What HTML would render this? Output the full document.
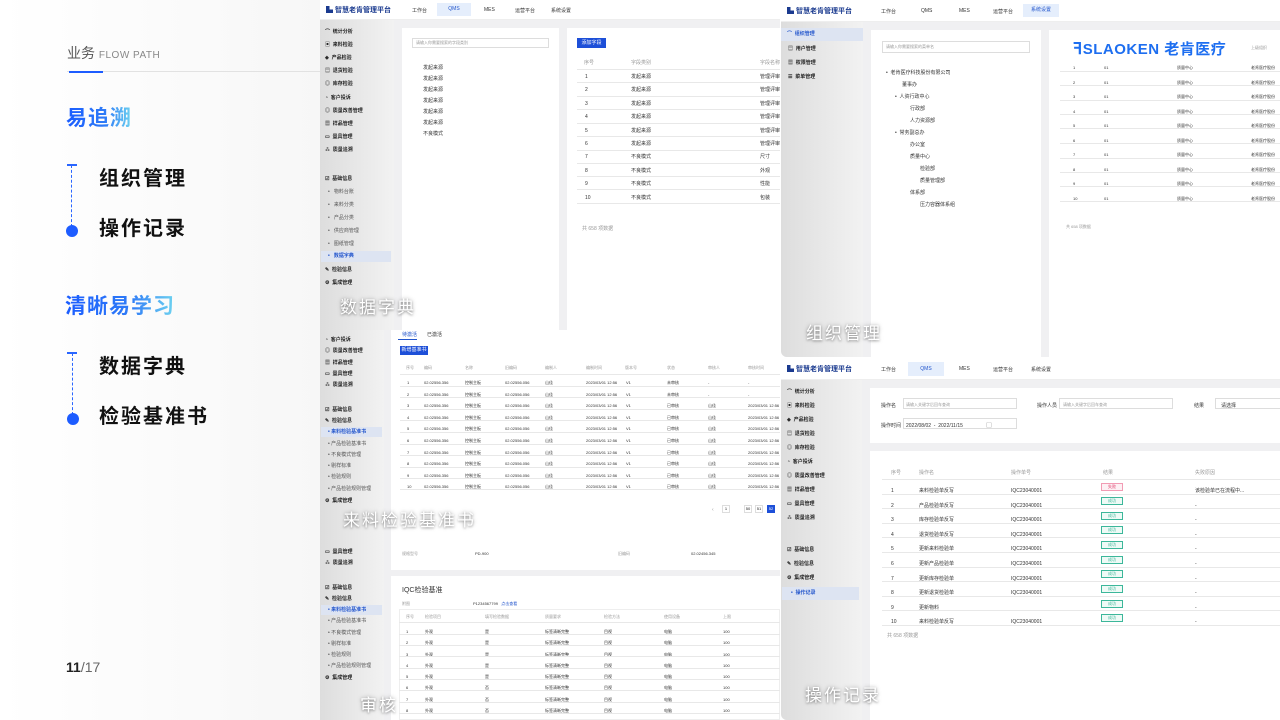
<!DOCTYPE html>
<html><head><meta charset="utf-8">
<style>
*{margin:0;padding:0;box-sizing:border-box}
body{width:1280px;height:720px;overflow:hidden;position:relative;background:#fff;font-family:"Liberation Sans","Noto Sans CJK SC",sans-serif;color:#222}
.a{position:absolute}
.panel{position:absolute;overflow:hidden;background:#f0f0f2}
.top{position:absolute;left:0;top:0;right:0;background:#fff;border-bottom:1px solid #eee}
.logo{position:absolute;font-size:7px;font-weight:bold;color:#1a3a8f;white-space:nowrap}
.nav{position:absolute;font-size:5px;color:#333;white-space:nowrap}
.navon{background:#e5eefc;color:#2255cc;text-align:center}
.side{position:absolute;left:0;bottom:0;background:linear-gradient(90deg,#ddd,#f2f2f2)}
.si{position:absolute;font-size:5px;color:#222;white-space:nowrap;font-weight:bold}
.si.sub{font-weight:normal;color:#555}
.on{background:#dde4f2;color:#2255cc}
.card{position:absolute;background:#fff}
.t{position:absolute;font-size:5px;color:#333;white-space:nowrap}
.g{color:#999}
.row{position:absolute;height:1px;background:#e8e8e8}
.btn{position:absolute;background:#1d4fd8;color:#fff;font-size:5px;text-align:center}
.ov{position:absolute;color:#fff;font-size:17px;letter-spacing:2px;text-shadow:0 0 4px rgba(0,0,0,.35),0 1px 2px rgba(0,0,0,.3);white-space:nowrap}
.head{position:absolute;font-size:20px;font-weight:bold;color:#111;letter-spacing:2px;white-space:nowrap}
.blue{position:absolute;font-size:21px;font-weight:bold;background:linear-gradient(90deg,#1a5cff,#2f7cf7 60%,#6fd4f0);-webkit-background-clip:text;color:transparent;white-space:nowrap;letter-spacing:1px}
.dash{position:absolute;width:0;border-left:1.5px dashed #2a66ff}
.dot{position:absolute;width:12px;height:12px;border-radius:50%;background:#1d5cff}
.cap{position:absolute;width:10px;height:1.5px;background:#2a66ff}
.tag{position:absolute;width:22px;height:8px;border:1px solid #3cb79a;color:#3cb79a;font-size:4px;text-align:center;line-height:6px;background:#effaf6}
</style></head><body>
<div class="a" style="left:0;top:0;width:320px;height:720px;background:linear-gradient(90deg,#fff,#f7f7f7)"></div>

<div class="a" style="left:67px;top:43px;font-size:14px;color:#555;white-space:nowrap">业务 <span style="font-size:10px;color:#888;letter-spacing:.5px">FLOW PATH</span></div>
<div class="a" style="left:67px;top:71px;width:713px;height:1px;background:#e2e2e2"></div>
<div class="a" style="left:69px;top:71px;width:34px;height:2px;background:#1d5cff"></div>
<div class="blue" style="left:66px;top:102px">易追溯</div>
<div class="cap" style="left:67px;top:164px"></div><div class="dash" style="left:71px;top:165px;height:62px"></div><div class="dot" style="left:66px;top:225px"></div>
<div class="head" style="left:99px;top:162px">组织管理</div>
<div class="head" style="left:99px;top:212px">操作记录</div>
<div class="blue" style="left:65px;top:290px">清晰易学习</div>
<div class="cap" style="left:67px;top:352px"></div><div class="dash" style="left:72px;top:353px;height:62px"></div><div class="dot" style="left:67px;top:413px"></div>
<div class="head" style="left:99px;top:350px">数据字典</div>
<div class="head" style="left:99px;top:400px">检验基准书</div>
<div class="a" style="left:66px;top:659px;font-size:14px;color:#222;font-weight:bold">11<span style="font-weight:normal;color:#666">/17</span></div>

<!-- Panel A -->
<div class="panel" style="left:320px;top:0;width:460px;height:330px;border-radius:6px 0 0 0">
 <div class="top" style="height:20px"></div>
 <div class="logo" style="left:6px;top:5px">▙ 智慧老肯管理平台</div>
 <div class="nav" style="left:92px;top:7px">工作台</div>
 <div class="nav navon" style="left:117px;top:3px;width:34px;height:13px;line-height:13px">QMS</div>
 <div class="nav" style="left:164px;top:7px">MES</div>
 <div class="nav" style="left:195px;top:7px">运营平台</div>
 <div class="nav" style="left:231px;top:7px">系统设置</div>
 <div class="side" style="top:20px;width:74px"></div>
 <div class="si" style="left:5px;top:28px">⌒ &nbsp;统计分析</div>
 <div class="si" style="left:5px;top:41px">▣ &nbsp;来料检验</div>
 <div class="si" style="left:5px;top:54px">◈ &nbsp;产品检验</div>
 <div class="si" style="left:5px;top:67px">▤ &nbsp;退货检验</div>
 <div class="si" style="left:5px;top:80px">◎ &nbsp;库存检验</div>
 <div class="si" style="left:5px;top:94px">◔ &nbsp;客户投诉</div>
 <div class="si" style="left:5px;top:107px">◎ &nbsp;质量改善管理</div>
 <div class="si" style="left:5px;top:120px">▦ &nbsp;样品管理</div>
 <div class="si" style="left:5px;top:133px">▭ &nbsp;量具管理</div>
 <div class="si" style="left:5px;top:146px">⁂ &nbsp;质量追溯</div>
 <div class="si" style="left:5px;top:175px">☑ &nbsp;基础信息</div>
 <div class="si sub" style="left:8px;top:188px">• &nbsp; 物料台账</div>
 <div class="si sub" style="left:8px;top:201px">• &nbsp; 来料分类</div>
 <div class="si sub" style="left:8px;top:214px">• &nbsp; 产品分类</div>
 <div class="si sub" style="left:8px;top:227px">• &nbsp; 供应商管理</div>
 <div class="si sub" style="left:8px;top:240px">• &nbsp; 图纸管理</div>
 <div class="si on" style="left:1px;top:251px;width:70px;height:11px;line-height:11px;padding-left:7px">• &nbsp; 数据字典</div>
 <div class="si" style="left:5px;top:266px">✎ &nbsp;检验信息</div>
 <div class="si" style="left:5px;top:279px">⚙ &nbsp;集成管理</div>
 <div class="card" style="left:82px;top:28px;width:157px;height:302px"></div>
 <div class="a" style="left:92px;top:38px;width:137px;height:10px;border:1px solid #ddd"></div>
 <div class="t g" style="left:96px;top:40px;font-size:4px">请输入你需要搜索的字段类别</div>
 <div class="t" style="left:103px;top:64px">发起来源</div><div class="t" style="left:103px;top:75px">发起来源</div><div class="t" style="left:103px;top:86px">发起来源</div><div class="t" style="left:103px;top:97px">发起来源</div><div class="t" style="left:103px;top:108px">发起来源</div><div class="t" style="left:103px;top:119px">发起来源</div><div class="t" style="left:103px;top:130px">不良模式</div>
 <div class="card" style="left:247px;top:28px;width:213px;height:302px"></div>
 <div class="btn" style="left:257px;top:38px;width:29px;height:10px;line-height:10px">添加字段</div>
 <div class="t g" style="left:264px;top:59px">序号</div><div class="t g" style="left:311px;top:59px">字段类别</div><div class="t g" style="left:440px;top:59px">字段名称</div>
 <div class="row" style="left:257px;top:69px;width:203px"></div>
 <div class="t" style="left:265px;top:71px;line-height:13.4px">1<br>2<br>3<br>4<br>5<br>6<br>7<br>8<br>9<br>10</div>
 <div class="t" style="left:311px;top:71px;line-height:13.4px">发起来源<br>发起来源<br>发起来源<br>发起来源<br>发起来源<br>发起来源<br>不良模式<br>不良模式<br>不良模式<br>不良模式</div>
 <div class="t" style="left:440px;top:71px;line-height:13.4px">管理评审<br>管理评审<br>管理评审<br>管理评审<br>管理评审<br>管理评审<br>尺寸<br>外观<br>性能<br>包装</div>
 <div class="row" style="left:257px;top:82px;width:203px"></div><div class="row" style="left:257px;top:96px;width:203px"></div><div class="row" style="left:257px;top:109px;width:203px"></div><div class="row" style="left:257px;top:123px;width:203px"></div><div class="row" style="left:257px;top:136px;width:203px"></div><div class="row" style="left:257px;top:150px;width:203px"></div><div class="row" style="left:257px;top:163px;width:203px"></div><div class="row" style="left:257px;top:176px;width:203px"></div><div class="row" style="left:257px;top:189px;width:203px"></div><div class="row" style="left:257px;top:203px;width:203px"></div>
 <div class="t g" style="left:262px;top:225px">共 658 项数据</div>
</div>
<div class="ov" style="left:340px;top:293px">数据字典</div>

<!-- Panel B -->
<div class="panel" style="left:320px;top:330px;width:460px;height:215px">
 <div class="side" style="top:0;width:64px"></div>
 <div class="si" style="left:5px;top:6px">◔ &nbsp;客户投诉</div>
 <div class="si" style="left:5px;top:17px">◎ &nbsp;质量改善管理</div>
 <div class="si" style="left:5px;top:29px">▦ &nbsp;样品管理</div>
 <div class="si" style="left:5px;top:40px">▭ &nbsp;量具管理</div>
 <div class="si" style="left:5px;top:51px">⁂ &nbsp;质量追溯</div>
 <div class="si" style="left:5px;top:76px">☑ &nbsp;基础信息</div>
 <div class="si" style="left:5px;top:87px">✎ &nbsp;检验信息</div>
 <div class="si on" style="left:1px;top:97px;width:61px;height:10px;line-height:10px;padding-left:7px">• 来料检验基准书</div>
 <div class="si sub" style="left:8px;top:110px">• 产品检验基准书</div>
 <div class="si sub" style="left:8px;top:121px">• 不良模式管理</div>
 <div class="si sub" style="left:8px;top:132px">• 剔样标准</div>
 <div class="si sub" style="left:8px;top:143px">• 检验规则</div>
 <div class="si sub" style="left:8px;top:155px">• 产品检验规则管理</div>
 <div class="si" style="left:5px;top:167px">⚙ &nbsp;集成管理</div>
 <div class="card" style="left:71px;top:0;width:389px;height:215px"></div>
 <div class="t" style="left:82px;top:1px;color:#2255cc">待激活</div><div class="t" style="left:107px;top:1px">已激活</div>
 <div class="a" style="left:78px;top:9px;width:19px;height:1px;background:#2255cc"></div>
 <div class="btn" style="left:80px;top:16px;width:28px;height:9px;line-height:9px">新增基准书</div>
 <div class="t g" style="left:86px;top:35px;font-size:4px">序号</div><div class="t g" style="left:104px;top:35px;font-size:4px">编码</div><div class="t g" style="left:145px;top:35px;font-size:4px">名称</div><div class="t g" style="left:185px;top:35px;font-size:4px">旧编码</div><div class="t g" style="left:225px;top:35px;font-size:4px">编制人</div><div class="t g" style="left:266px;top:35px;font-size:4px">编制时间</div><div class="t g" style="left:305px;top:35px;font-size:4px">版本号</div><div class="t g" style="left:347px;top:35px;font-size:4px">状态</div><div class="t g" style="left:388px;top:35px;font-size:4px">审核人</div><div class="t g" style="left:428px;top:35px;font-size:4px">审核时间</div>
 <div class="t" style="left:87px;top:47px;font-size:4px;line-height:11.6px">1<br>2<br>3<br>4<br>5<br>6<br>7<br>8<br>9<br>10</div>
 <div class="t" style="left:104px;top:47px;font-size:4px;line-height:11.6px">02.02556.356<br>02.02556.356<br>02.02556.356<br>02.02556.356<br>02.02556.356<br>02.02556.356<br>02.02556.356<br>02.02556.356<br>02.02556.356<br>02.02556.356</div>
 <div class="t" style="left:145px;top:47px;font-size:4px;line-height:11.6px">控制主板<br>控制主板<br>控制主板<br>控制主板<br>控制主板<br>控制主板<br>控制主板<br>控制主板<br>控制主板<br>控制主板</div>
 <div class="t" style="left:185px;top:47px;font-size:4px;line-height:11.6px">02.02556.056<br>02.02556.056<br>02.02556.056<br>02.02556.056<br>02.02556.056<br>02.02556.056<br>02.02556.056<br>02.02556.056<br>02.02556.056<br>02.02556.056</div>
 <div class="t" style="left:225px;top:47px;font-size:4px;line-height:11.6px">山佳<br>山佳<br>山佳<br>山佳<br>山佳<br>山佳<br>山佳<br>山佳<br>山佳<br>山佳</div>
 <div class="t" style="left:266px;top:47px;font-size:4px;line-height:11.6px">2023/03/01 12:56<br>2023/03/01 12:56<br>2023/03/01 12:56<br>2023/03/01 12:56<br>2023/03/01 12:56<br>2023/03/01 12:56<br>2023/03/01 12:56<br>2023/03/01 12:56<br>2023/03/01 12:56<br>2023/03/01 12:56</div>
 <div class="t" style="left:306px;top:47px;font-size:4px;line-height:11.6px">V1<br>V1<br>V1<br>V1<br>V1<br>V1<br>V1<br>V1<br>V1<br>V1</div>
 <div class="t" style="left:347px;top:47px;font-size:4px;line-height:11.6px">未审核<br>未审核<br>已审核<br>已审核<br>已审核<br>已审核<br>已审核<br>已审核<br>已审核<br>已审核</div>
 <div class="t" style="left:388px;top:47px;font-size:4px;line-height:11.6px">-<br>-<br>山佳<br>山佳<br>山佳<br>山佳<br>山佳<br>山佳<br>山佳<br>山佳</div>
 <div class="t" style="left:428px;top:47px;font-size:4px;line-height:11.6px">-<br>-<br>2023/03/01 12:56<br>2023/03/01 12:56<br>2023/03/01 12:56<br>2023/03/01 12:56<br>2023/03/01 12:56<br>2023/03/01 12:56<br>2023/03/01 12:56<br>2023/03/01 12:56</div>
 <div class="row" style="left:80px;top:44px;width:380px"></div><div class="row" style="left:80px;top:56px;width:380px"></div><div class="row" style="left:80px;top:67px;width:380px"></div><div class="row" style="left:80px;top:79px;width:380px"></div><div class="row" style="left:80px;top:90px;width:380px"></div><div class="row" style="left:80px;top:102px;width:380px"></div><div class="row" style="left:80px;top:114px;width:380px"></div><div class="row" style="left:80px;top:125px;width:380px"></div><div class="row" style="left:80px;top:137px;width:380px"></div><div class="row" style="left:80px;top:148px;width:380px"></div><div class="row" style="left:80px;top:159px;width:380px"></div>
 <div class="t g" style="left:392px;top:177px">‹</div>
 <div class="a" style="left:402px;top:175px;width:8px;height:8px;border:1px solid #ddd;font-size:4px;text-align:center;line-height:6px">1</div>
 <div class="a" style="left:424px;top:175px;width:8px;height:8px;border:1px solid #ddd;font-size:4px;text-align:center;line-height:6px">50</div>
 <div class="a" style="left:435px;top:175px;width:8px;height:8px;border:1px solid #ddd;font-size:4px;text-align:center;line-height:6px">51</div>
 <div class="a" style="left:447px;top:175px;width:8px;height:8px;background:#1d4fd8;color:#fff;font-size:4px;text-align:center;line-height:8px">52</div>
</div>
<div class="ov" style="left:343px;top:506px">来料检验基准书</div>

<!-- Panel B2 -->
<div class="panel" style="left:320px;top:545px;width:460px;height:175px">
 <div class="side" style="top:0;width:64px"></div>
 <div class="si" style="left:5px;top:3px">▭ &nbsp;量具管理</div>
 <div class="si" style="left:5px;top:14px">⁂ &nbsp;质量追溯</div>
 <div class="si" style="left:5px;top:39px">☑ &nbsp;基础信息</div>
 <div class="si" style="left:5px;top:50px">✎ &nbsp;检验信息</div>
 <div class="si on" style="left:1px;top:60px;width:61px;height:10px;line-height:10px;padding-left:7px">• 来料检验基准书</div>
 <div class="si sub" style="left:8px;top:72px">• 产品检验基准书</div>
 <div class="si sub" style="left:8px;top:84px">• 不良模式管理</div>
 <div class="si sub" style="left:8px;top:95px">• 剔样标准</div>
 <div class="si sub" style="left:8px;top:106px">• 检验规则</div>
 <div class="si sub" style="left:8px;top:117px">• 产品检验规则管理</div>
 <div class="si" style="left:5px;top:129px">⚙ &nbsp;集成管理</div>
 <div class="card" style="left:71px;top:0;width:389px;height:25px"></div>
 <div class="t g" style="left:82px;top:6px;font-size:4px">规格型号</div><div class="t" style="left:155px;top:6px;font-size:4px">PD-900</div><div class="t g" style="left:298px;top:6px;font-size:4px">旧编码</div><div class="t" style="left:371px;top:6px;font-size:4px">02.02456.345</div>
 <div class="card" style="left:71px;top:31px;width:389px;height:144px"></div>
 <div class="t" style="left:82px;top:40px;font-size:7px">IQC检验基准</div>
 <div class="t g" style="left:82px;top:56px;font-size:4px">附图</div><div class="t" style="left:153px;top:56px;font-size:4px">P1234567799 &nbsp; <span style="color:#2255cc">点击查看</span></div>
 <div class="a" style="left:79px;top:64px;width:381px;height:111px;border:1px solid #eee"></div>
 <div class="t g" style="left:86px;top:69px;font-size:4px">序号</div><div class="t g" style="left:105px;top:69px;font-size:4px">检验项目</div><div class="t g" style="left:165px;top:69px;font-size:4px">填写检验数据</div><div class="t g" style="left:225px;top:69px;font-size:4px">质量要求</div><div class="t g" style="left:284px;top:69px;font-size:4px">检验方法</div><div class="t g" style="left:344px;top:69px;font-size:4px">使用设备</div><div class="t g" style="left:403px;top:69px;font-size:4px">上限</div>
 <div class="t" style="left:86px;top:81px;font-size:4px;line-height:11.3px">1<br>2<br>3<br>4<br>5<br>6<br>7<br>8</div>
 <div class="t" style="left:105px;top:81px;font-size:4px;line-height:11.3px">外观<br>外观<br>外观<br>外观<br>外观<br>外观<br>外观<br>外观</div>
 <div class="t" style="left:165px;top:81px;font-size:4px;line-height:11.3px">是<br>是<br>是<br>是<br>是<br>否<br>否<br>否</div>
 <div class="t" style="left:225px;top:81px;font-size:4px;line-height:11.3px">标签清晰完整<br>标签清晰完整<br>标签清晰完整<br>标签清晰完整<br>标签清晰完整<br>标签清晰完整<br>标签清晰完整<br>标签清晰完整</div>
 <div class="t" style="left:284px;top:81px;font-size:4px;line-height:11.3px">目视<br>目视<br>目视<br>目视<br>目视<br>目视<br>目视<br>目视</div>
 <div class="t" style="left:344px;top:81px;font-size:4px;line-height:11.3px">电脑<br>电脑<br>电脑<br>电脑<br>电脑<br>电脑<br>电脑<br>电脑</div>
 <div class="t" style="left:403px;top:81px;font-size:4px;line-height:11.3px">100<br>100<br>100<br>100<br>100<br>100<br>100<br>100</div>
 <div class="row" style="left:79px;top:77px;width:381px"></div><div class="row" style="left:79px;top:89px;width:381px"></div><div class="row" style="left:79px;top:100px;width:381px"></div><div class="row" style="left:79px;top:111px;width:381px"></div><div class="row" style="left:79px;top:123px;width:381px"></div><div class="row" style="left:79px;top:134px;width:381px"></div><div class="row" style="left:79px;top:145px;width:381px"></div><div class="row" style="left:79px;top:157px;width:381px"></div><div class="row" style="left:79px;top:168px;width:381px"></div>
</div>
<div class="ov" style="left:360px;top:691px">审核</div>

<!-- Panel C -->
<div class="panel" style="left:781px;top:0;width:499px;height:357px;border-radius:6px 0 0 6px">
 <div class="top" style="height:22px"></div>
 <div class="logo" style="left:6px;top:6px">▙ 智慧老肯管理平台</div>
 <div class="nav" style="left:100px;top:8px">工作台</div>
 <div class="nav" style="left:140px;top:8px">QMS</div>
 <div class="nav" style="left:178px;top:8px">MES</div>
 <div class="nav" style="left:212px;top:8px">运营平台</div>
 <div class="nav navon" style="left:242px;top:4px;width:36px;height:13px;line-height:13px">系统设置</div>
 <div class="side" style="top:22px;width:82px"></div>
 <div class="si on" style="left:0;top:28px;width:82px;height:13px;line-height:13px;padding-left:6px">⌒ &nbsp;组织管理</div>
 <div class="si" style="left:7px;top:45px">▤ &nbsp;用户管理</div>
 <div class="si" style="left:7px;top:59px">▦ &nbsp;权限管理</div>
 <div class="si" style="left:7px;top:73px">☰ &nbsp;菜单管理</div>
 <div class="card" style="left:90px;top:30px;width:170px;height:327px"></div>
 <div class="a" style="left:101px;top:41px;width:148px;height:12px;border:1px solid #ddd"></div>
 <div class="t g" style="left:105px;top:44px;font-size:4px">请输入你需要搜索的菜单名</div>
 <div class="t" style="left:105px;top:69px">• &nbsp;老肯医疗科技股份有限公司</div>
 <div class="t" style="left:121px;top:81px">董事办</div>
 <div class="t" style="left:114px;top:93px">• &nbsp;人资行政中心</div>
 <div class="t" style="left:129px;top:105px">行政部</div>
 <div class="t" style="left:129px;top:117px">人力资源部</div>
 <div class="t" style="left:114px;top:129px">• &nbsp;常务副总办</div>
 <div class="t" style="left:129px;top:141px">办公室</div>
 <div class="t" style="left:129px;top:153px">质量中心</div>
 <div class="t" style="left:139px;top:165px">检验部</div>
 <div class="t" style="left:139px;top:177px">质量管理部</div>
 <div class="t" style="left:129px;top:189px">体系部</div>
 <div class="t" style="left:139px;top:201px">压力容器体系组</div>
 <div class="card" style="left:268px;top:30px;width:231px;height:327px"></div>
 <div class="a" style="left:292px;top:38px;font-size:16px;font-weight:bold;color:#1d6ef0;white-space:nowrap;letter-spacing:.5px">ꟻ<span style="font-size:15px">SLAOKEN 老肯医疗</span></div>
 <div class="t g" style="left:470px;top:45px;font-size:4px">上级组织</div>
 <div class="t" style="left:292px;top:61px;font-size:4px;line-height:14.5px">1<br>2<br>3<br>4<br>5<br>6<br>7<br>8<br>9<br>10</div>
 <div class="t" style="left:323px;top:61px;font-size:4px;line-height:14.5px">01<br>01<br>01<br>01<br>01<br>01<br>01<br>01<br>01<br>01</div>
 <div class="t" style="left:396px;top:61px;font-size:4px;line-height:14.5px">质量中心<br>质量中心<br>质量中心<br>质量中心<br>质量中心<br>质量中心<br>质量中心<br>质量中心<br>质量中心<br>质量中心</div>
 <div class="t" style="left:470px;top:61px;font-size:4px;line-height:14.5px">老肯医疗股份<br>老肯医疗股份<br>老肯医疗股份<br>老肯医疗股份<br>老肯医疗股份<br>老肯医疗股份<br>老肯医疗股份<br>老肯医疗股份<br>老肯医疗股份<br>老肯医疗股份</div>
 <div class="row" style="left:279px;top:71px;width:220px"></div><div class="row" style="left:279px;top:85px;width:220px"></div><div class="row" style="left:279px;top:100px;width:220px"></div><div class="row" style="left:279px;top:114px;width:220px"></div><div class="row" style="left:279px;top:128px;width:220px"></div><div class="row" style="left:279px;top:143px;width:220px"></div><div class="row" style="left:279px;top:158px;width:220px"></div><div class="row" style="left:279px;top:172px;width:220px"></div><div class="row" style="left:279px;top:186px;width:220px"></div><div class="row" style="left:279px;top:201px;width:220px"></div>
 <div class="t g" style="left:285px;top:224px;font-size:4px">共 658 项数据</div>
</div>
<div class="ov" style="left:806px;top:319px">组织管理</div>

<!-- Panel D -->
<div class="panel" style="left:781px;top:358px;width:499px;height:362px;border-radius:6px 0 0 6px">
 <div class="top" style="height:22px"></div>
 <div class="logo" style="left:6px;top:6px">▙ 智慧老肯管理平台</div>
 <div class="nav" style="left:100px;top:8px">工作台</div>
 <div class="nav navon" style="left:127px;top:4px;width:36px;height:14px;line-height:14px">QMS</div>
 <div class="nav" style="left:178px;top:8px">MES</div>
 <div class="nav" style="left:212px;top:8px">运营平台</div>
 <div class="nav" style="left:250px;top:8px">系统设置</div>
 <div class="side" style="top:22px;width:81px"></div>
 <div class="si" style="left:6px;top:30px">⌒ &nbsp;统计分析</div>
 <div class="si" style="left:6px;top:44px">▣ &nbsp;来料检验</div>
 <div class="si" style="left:6px;top:58px">◈ &nbsp;产品检验</div>
 <div class="si" style="left:6px;top:72px">▤ &nbsp;退货检验</div>
 <div class="si" style="left:6px;top:86px">◎ &nbsp;库存检验</div>
 <div class="si" style="left:6px;top:100px">◔ &nbsp;客户投诉</div>
 <div class="si" style="left:6px;top:114px">◎ &nbsp;质量改善管理</div>
 <div class="si" style="left:6px;top:128px">▦ &nbsp;样品管理</div>
 <div class="si" style="left:6px;top:142px">▭ &nbsp;量具管理</div>
 <div class="si" style="left:6px;top:156px">⁂ &nbsp;质量追溯</div>
 <div class="si" style="left:6px;top:188px">☑ &nbsp;基础信息</div>
 <div class="si" style="left:6px;top:202px">✎ &nbsp;检验信息</div>
 <div class="si" style="left:6px;top:216px">⚙ &nbsp;集成管理</div>
 <div class="si on" style="left:1px;top:229px;width:77px;height:13px;line-height:13px;padding-left:9px">• &nbsp;操作记录</div>
 <div class="card" style="left:89px;top:30px;width:410px;height:55px"></div>
 <div class="t" style="left:100px;top:44px">操作名</div><div class="a" style="left:122px;top:40px;width:114px;height:11px;border:1px solid #ddd"></div><div class="t g" style="left:125px;top:44px;font-size:4px">请输入关键字后回车查询</div>
 <div class="t" style="left:256px;top:44px">操作人员</div><div class="a" style="left:278px;top:40px;width:114px;height:11px;border:1px solid #ddd"></div><div class="t g" style="left:282px;top:44px;font-size:4px">请输入关键字后回车查询</div>
 <div class="t" style="left:413px;top:44px">结果</div><div class="a" style="left:434px;top:40px;width:70px;height:11px;border:1px solid #ddd"></div><div class="t" style="left:440px;top:44px">请选择</div>
 <div class="t" style="left:100px;top:64px">操作时间</div><div class="a" style="left:122px;top:60px;width:114px;height:11px;border:1px solid #ddd"></div><div class="t" style="left:125px;top:64px">2022/08/02 &nbsp;- &nbsp;2022/11/15 &nbsp; &nbsp; &nbsp; &nbsp; &nbsp; &nbsp; &nbsp; &nbsp; ▢</div>
 <div class="card" style="left:89px;top:93px;width:410px;height:269px"></div>
 <div class="t g" style="left:110px;top:111px">序号</div><div class="t g" style="left:138px;top:111px">操作名</div><div class="t g" style="left:230px;top:111px">操作单号</div><div class="t g" style="left:322px;top:111px">结果</div><div class="t g" style="left:414px;top:111px">失败原因</div>
 <div class="t" style="left:110px;top:126px;line-height:14.6px">1<br>2<br>3<br>4<br>5<br>6<br>7<br>8<br>9<br>10</div>
 <div class="t" style="left:138px;top:126px;line-height:14.6px">来料检验单反写<br>产品检验单反写<br>库存检验单反写<br>退货检验单反写<br>更新来料检验单<br>更新产品检验单<br>更新库存检验单<br>更新退货检验单<br>更新物料<br>来料检验单反写</div>
 <div class="t" style="left:230px;top:126px;line-height:14.6px">IQC23040001<br>IQC23040001<br>IQC23040001<br>IQC23040001<br>IQC23040001<br>IQC23040001<br>IQC23040001<br>IQC23040001<br><br>IQC23040001</div>
 <div class="t" style="left:414px;top:126px;line-height:14.6px">该检验单已在流程中...<br>-<br>-<br>-<br>-<br>-<br>-<br>-<br>-<br>-</div>
 <div class="tag" style="left:320px;top:125px;border-color:#f29bb4;color:#e0406e;background:#fdf0f4">失败</div>
 <div class="tag" style="left:320px;top:139px">成功</div><div class="tag" style="left:320px;top:154px">成功</div><div class="tag" style="left:320px;top:168px">成功</div><div class="tag" style="left:320px;top:183px">成功</div><div class="tag" style="left:320px;top:198px">成功</div><div class="tag" style="left:320px;top:212px">成功</div><div class="tag" style="left:320px;top:227px">成功</div><div class="tag" style="left:320px;top:242px">成功</div><div class="tag" style="left:320px;top:256px">成功</div>
 <div class="row" style="left:101px;top:121px;width:398px"></div><div class="row" style="left:101px;top:136px;width:398px"></div><div class="row" style="left:101px;top:150px;width:398px"></div><div class="row" style="left:101px;top:165px;width:398px"></div><div class="row" style="left:101px;top:179px;width:398px"></div><div class="row" style="left:101px;top:194px;width:398px"></div><div class="row" style="left:101px;top:209px;width:398px"></div><div class="row" style="left:101px;top:223px;width:398px"></div><div class="row" style="left:101px;top:238px;width:398px"></div><div class="row" style="left:101px;top:252px;width:398px"></div><div class="row" style="left:101px;top:267px;width:398px"></div>
 <div class="t g" style="left:106px;top:274px">共 658 项数据</div>
</div>
<div class="ov" style="left:805px;top:681px">操作记录</div>
</body></html>
